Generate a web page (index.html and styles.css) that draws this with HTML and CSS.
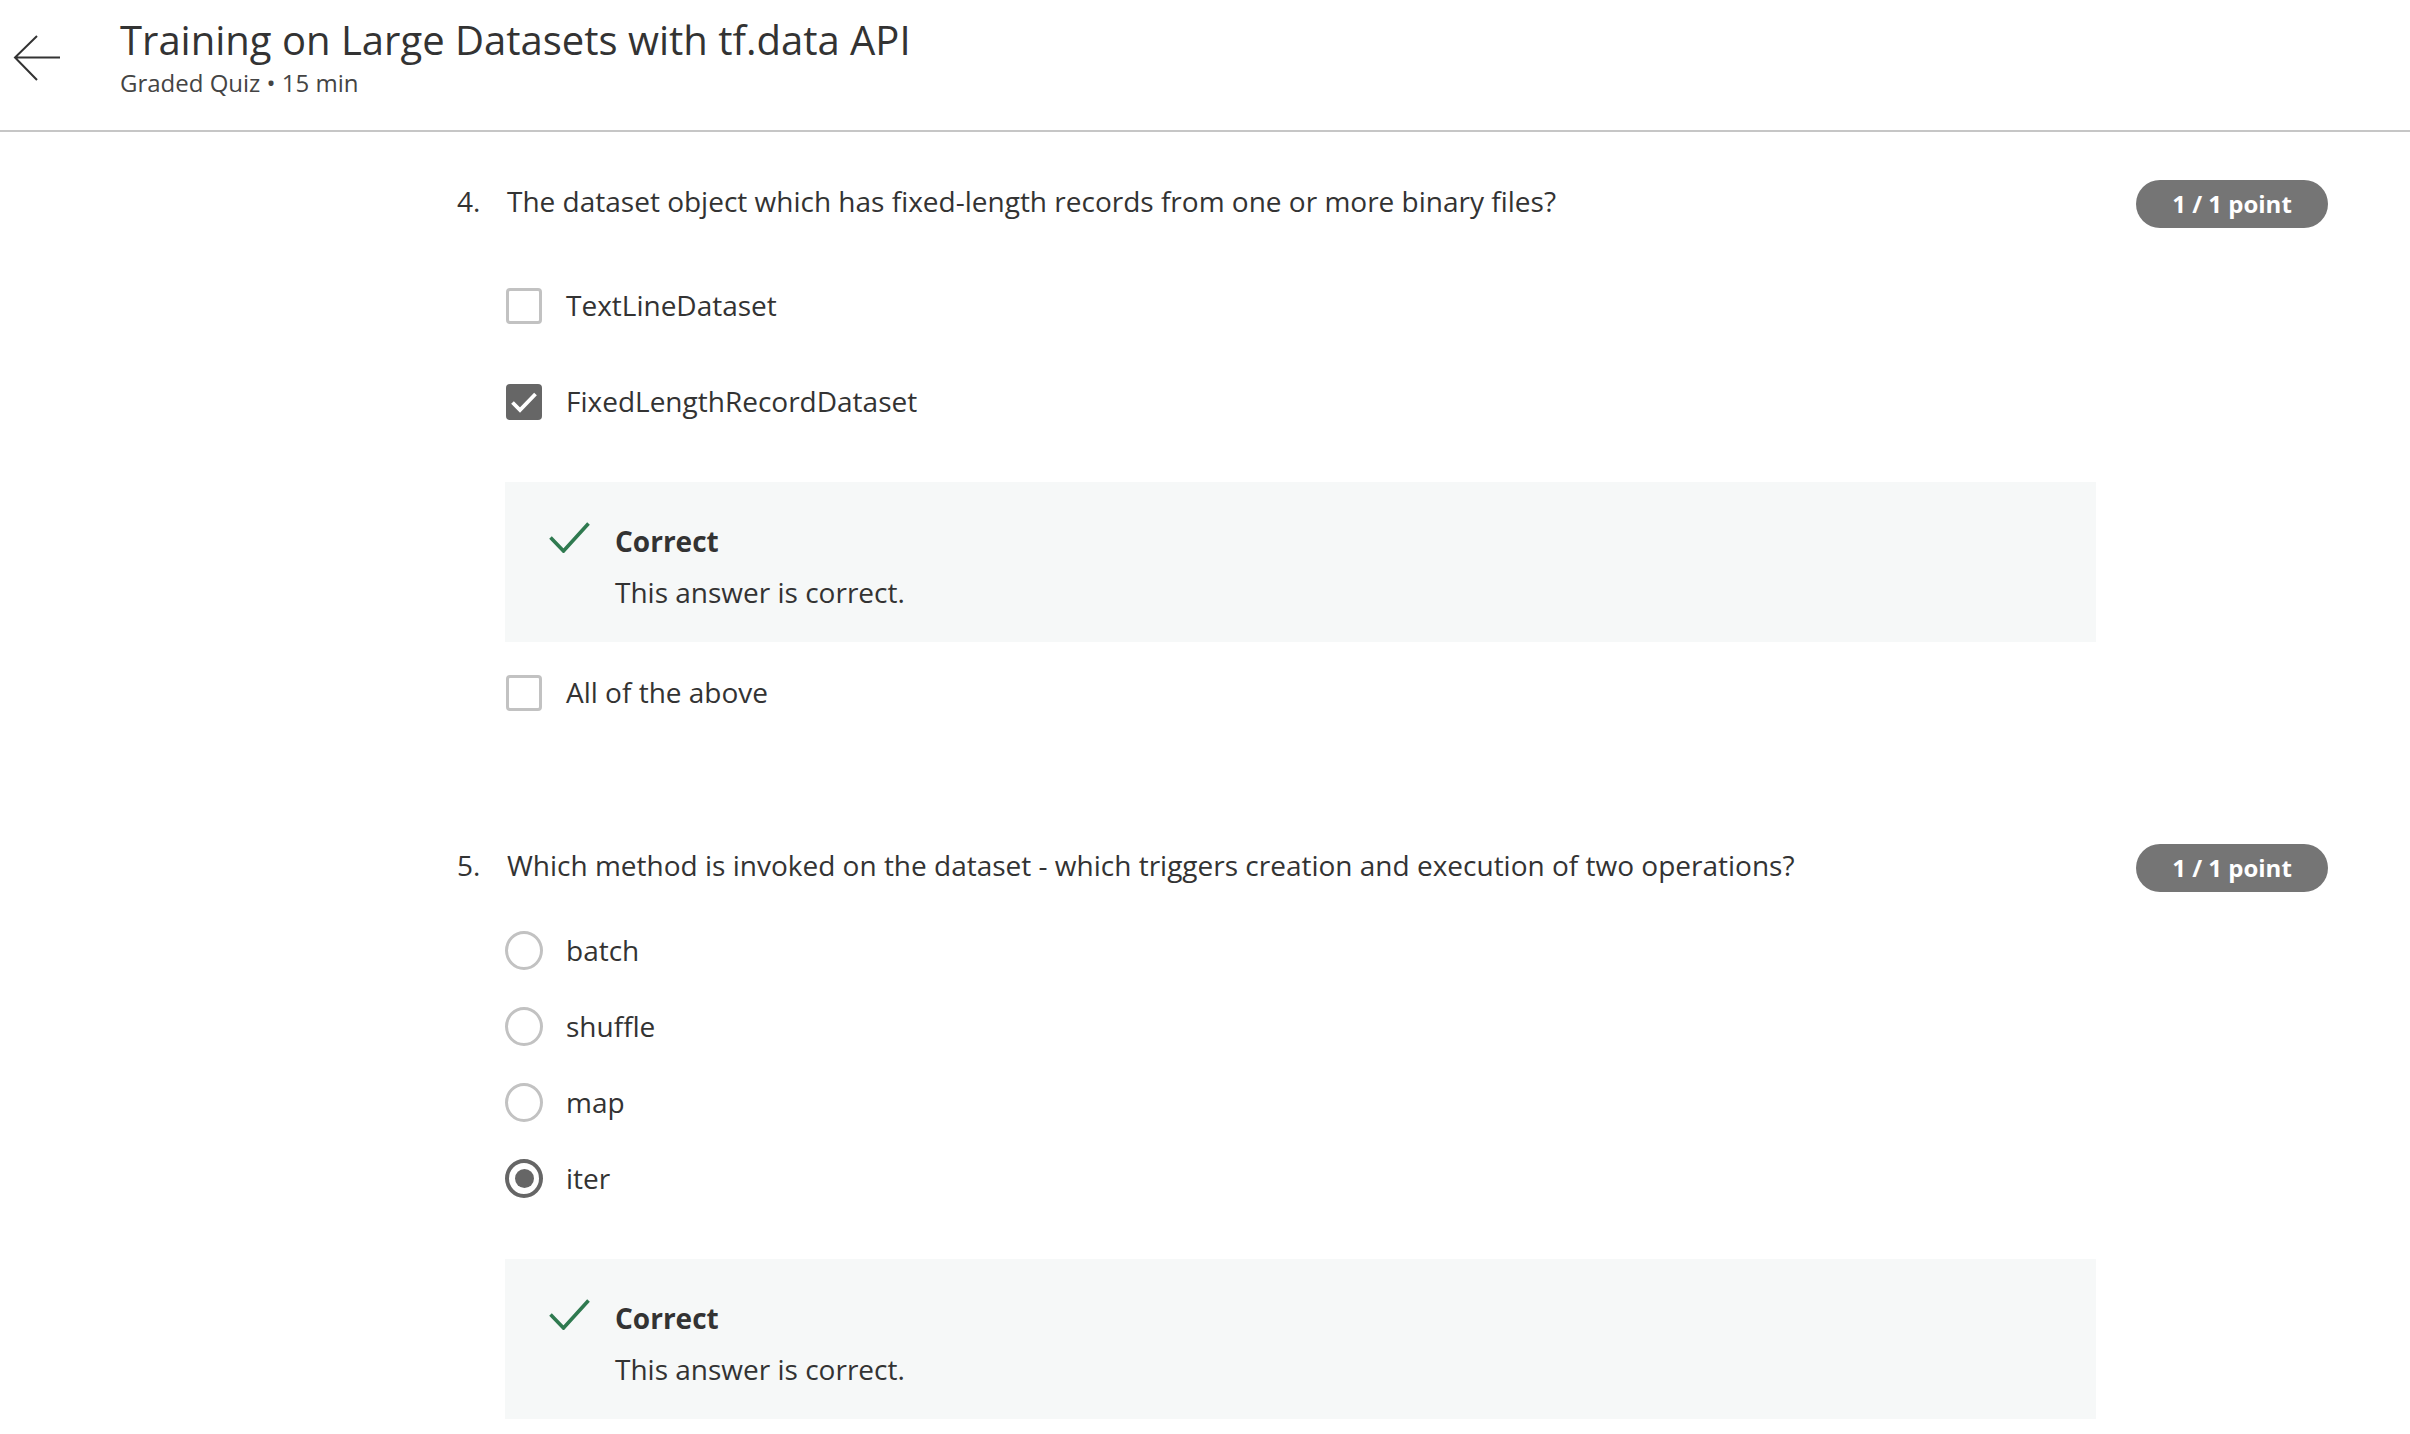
FILE: index.html
```html
<!DOCTYPE html>
<html lang="en">
<head>
<meta charset="utf-8">
<title>Training on Large Datasets with tf.data API</title>
<link rel="stylesheet" href="styles.css">
</head>
<body>
<header class="topbar">
  <button class="back" aria-label="Back">
    <svg width="47" height="46" viewBox="0 0 47 46" fill="none" stroke="#333" stroke-width="2"><path d="M47 22.5H2M24 1L2 22.5L24 45"/></svg>
  </button>
  <div class="titles">
    <h1 class="title">Training on Large Datasets with tf.data API</h1>
    <div class="meta">Graded Quiz • 15 min</div>
  </div>
</header>

<main class="quiz">
  <section class="question q4">
    <div class="num">4.</div>
    <div class="q-body">
      <div class="prompt">The dataset object which has fixed-length records from one or more binary files?</div>
      <div class="options checks">
        <div class="option"><span class="ctrl"><span class="box"></span></span><span class="label">TextLineDataset</span></div>
        <div class="option"><span class="ctrl"><span class="box checked"><svg width="36" height="36" viewBox="0 0 36 36" fill="none" stroke="#fff" stroke-width="3.8"><path d="M6.5 18.5L14 26L29.5 10"/></svg></span></span><span class="label">FixedLengthRecordDataset</span></div>
        <div class="feedback">
          <svg class="ok" width="41" height="31" viewBox="0 0 41 31" fill="none" stroke="#2f7a50" stroke-width="3.6"><path d="M1.5 15.5L14.5 29L39.5 1.5"/></svg>
          <div class="fb-text">
            <div class="fb-title">Correct</div>
            <div class="fb-body">This answer is correct.</div>
          </div>
        </div>
        <div class="option after-fb"><span class="ctrl"><span class="box"></span></span><span class="label">All of the above</span></div>
      </div>
    </div>
    <div class="badge">1 / 1 point</div>
  </section>

  <section class="question q5">
    <div class="num">5.</div>
    <div class="q-body">
      <div class="prompt">Which method is invoked on the dataset - which triggers creation and execution of two operations?</div>
      <div class="options radios">
        <div class="option"><span class="ctrl"><span class="radio"></span></span><span class="label">batch</span></div>
        <div class="option"><span class="ctrl"><span class="radio"></span></span><span class="label">shuffle</span></div>
        <div class="option"><span class="ctrl"><span class="radio"></span></span><span class="label">map</span></div>
        <div class="option"><span class="ctrl"><span class="radio selected"></span></span><span class="label">iter</span></div>
        <div class="feedback">
          <svg class="ok" width="41" height="31" viewBox="0 0 41 31" fill="none" stroke="#2f7a50" stroke-width="3.6"><path d="M1.5 15.5L14.5 29L39.5 1.5"/></svg>
          <div class="fb-text">
            <div class="fb-title">Correct</div>
            <div class="fb-body">This answer is correct.</div>
          </div>
        </div>
      </div>
    </div>
    <div class="badge">1 / 1 point</div>
  </section>
</main>
</body>
</html>
```

FILE: styles.css
```css
* { box-sizing: border-box; }

html, body {
  margin: 0;
  background: #fff;
  color: #333;
  font-family: "Open Sans", "Noto Sans", "Liberation Sans", sans-serif;
}

.topbar {
  display: flex;
  align-items: flex-start;
  padding: 16px 0 31px 13px;
  border-bottom: 2px solid #c6c6c6;
}

.back {
  border: 0;
  background: none;
  padding: 0;
  margin: 19px 60px 0 0;
  width: 47px;
  height: 46px;
  display: block;
}
.back svg { display: block; }

.title {
  margin: 0;
  font-size: 40px;
  line-height: 48px;
  font-weight: 400;
  color: #333;
}

.meta {
  margin-top: 3px;
  font-size: 24px;
  line-height: 32px;
  color: #444;
}

.quiz {
  margin-left: 457px;
  width: 1871px;
  padding-top: 49px;
}

.question {
  display: grid;
  grid-template-columns: 49px minmax(0, 1fr) 192px;
  align-items: start;
}
.q5 { margin-top: 133px; }
.q4 .badge { margin-top: -1px; }
.q5 .badge { margin-top: -1px; }

.num, .prompt, .label {
  font-size: 28px;
  line-height: 40px;
  color: #333;
}
.prompt { padding-left: 1px; }

.q-body { padding-right: 40px; }

.badge {
  height: 48px;
  border-radius: 24px;
  background: #757575;
  color: #fff;
  font-weight: 700;
  font-size: 24px;
  line-height: 48px;
  text-align: center;
}

.options { display: flex; flex-direction: column; }
.checks { margin-top: 64px; }
.checks .option + .option { margin-top: 56px; }
.radios { margin-top: 45px; }
.radios .option + .option { margin-top: 36px; }
.checks .option.after-fb { margin-top: 30px; }

.option {
  display: flex;
  align-items: center;
  height: 40px;
}

.ctrl {
  width: 38px;
  height: 40px;
  margin-left: -1px;
  margin-right: 23px;
  display: flex;
  align-items: center;
  justify-content: center;
}

.box {
  width: 36px;
  height: 36px;
  border: 3px solid #c2c2c2;
  border-radius: 4px;
  position: relative;
  top: 1px;
}
.box.checked {
  border: 0;
  background: #666;
}
.box svg { display: block; }

.radio {
  width: 39px;
  height: 39px;
  border: 3px solid #c2c2c2;
  border-radius: 50%;
}
.radio.selected {
  border: 4px solid #666;
  display: flex;
  align-items: center;
  justify-content: center;
}
.radio.selected::after {
  content: "";
  width: 19px;
  height: 19px;
  border-radius: 50%;
  background: #666;
}

.feedback {
  display: flex;
  align-items: flex-start;
  margin: 61px 0 0 -1px;
  padding: 39px 44px 30px 44px;
  background: #f6f8f8;
}
.ok { display: block; margin-top: 1px; margin-right: 25px; flex: none; }

.fb-title {
  font-size: 28px;
  line-height: 40px;
  font-weight: 700;
  color: #333;
}
.fb-body {
  margin-top: 11px;
  font-size: 28px;
  line-height: 40px;
  color: #333;
}
```
